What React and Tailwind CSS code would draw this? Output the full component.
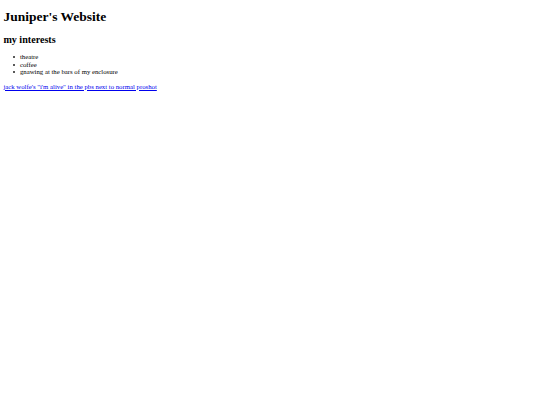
export default function App() {
  const items = ["theatre", "coffee", "gnawing at the bars of my enclosure"];
  return (
    <div className="min-h-[405px] bg-white text-black font-['Liberation_Serif',serif] text-[6.75px] leading-[7.6px] px-[3.4px] pt-[9px]">
      <h1 className="text-[13.5px] font-bold leading-[normal]">Juniper's Website</h1>
      <h2 className="mt-[9px] text-[10.1px] font-bold leading-[normal]">my interests</h2>
      <ul className="mt-[8.2px] list-none pl-[9.9px]">
        {items.map((t) => (
          <li key={t} className="flex items-center">
            <span className="mr-[4.7px] inline-block h-[2px] w-[2px] shrink-0 rounded-full bg-[#222]" />
            <span>{t}</span>
          </li>
        ))}
      </ul>
      <p className="mt-[6.75px]">
        <a href="#" className="text-[#0000ee] underline">jack wolfe's "i'm alive" in the pbs next to normal proshot</a>
      </p>
    </div>
  );
}
